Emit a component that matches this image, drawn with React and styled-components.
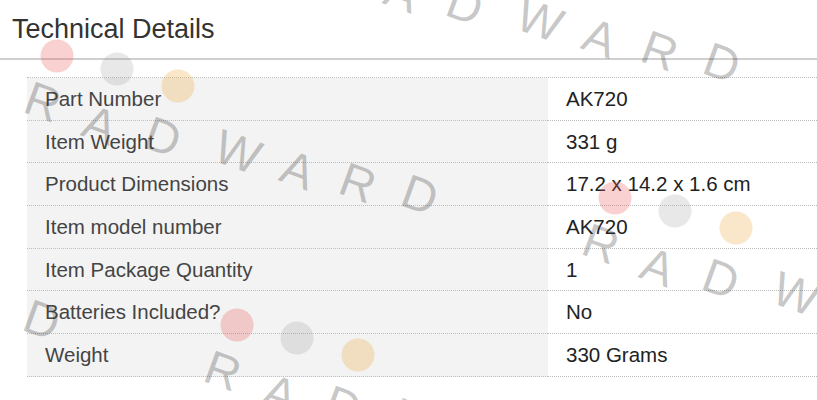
import React from "react";
import styled, { createGlobalStyle } from "styled-components";

const Global = createGlobalStyle`
  html, body { margin: 0; padding: 0; background: #fff; overflow: hidden; }
  body { font-family: "Liberation Sans", Arial, sans-serif; }
`;

const Page = styled.div`
  position: relative;
  width: 817px;
  height: 400px;
  overflow: hidden;
`;

const Header = styled.div`
  height: 58px;
  border-bottom: 2px solid #cfcfcf;
  padding-left: 12px;
  display: flex;
  align-items: flex-start;
`;

const Title = styled.h2`
  margin: 0;
  padding-top: 13px;
  font-size: 27px;
  font-weight: 400;
  color: #333;
  line-height: 32px;
`;

const Table = styled.div`
  margin: 17px 0 0 27px;
  width: 820px;
  display: grid;
  grid-template-columns: 521px 1fr;
  border-top: 1px dotted #bdbdbd;
`;

const Cell = styled.div`
  height: 41.7px;
  box-sizing: content-box;
  border-bottom: 1px dotted #bdbdbd;
  display: flex;
  align-items: center;
  font-size: 20.5px;
  padding-left: 18px;
  background: ${(p) => (p.$label ? "#f3f3f3" : "#fff")};
  color: ${(p) => (p.$label ? "#444" : "#222")};
`;

const Overlay = styled.svg`
  position: absolute;
  left: 0;
  top: 0;
  pointer-events: none;
`;

const rows = [
  ["Part Number", "AK720"],
  ["Item Weight", "331 g"],
  ["Product Dimensions", "17.2 x 14.2 x 1.6 cm"],
  ["Item model number", "AK720"],
  ["Item Package Quantity", "1"],
  ["Batteries Included?", "No"],
  ["Weight", "330 Grams"],
];

const letters = [
  ["R", 43, 102],
  ["A", 100, 125],
  ["D", 163, 137],
  ["W", 238, 152],
  ["A", 298, 170],
  ["R", 358, 183],
  ["D", 420, 195],
];

const dots = [
  [57, 56, "rgba(235,90,90,0.28)"],
  [117, 69, "rgba(150,150,150,0.22)"],
  [178, 86, "rgba(240,175,80,0.3)"],
];

const instances = [
  [0, 0],
  [302, -132],
  [558, 142],
  [180, 269],
  [-378, 125],
];

function Mark({ dx, dy }) {
  return (
    <g transform={`translate(${dx} ${dy})`}>
      {dots.map(([x, y, c], i) => (
        <circle key={i} cx={x} cy={y} r="16.5" fill={c} />
      ))}
      {letters.map(([l, x, y], i) => (
        <text
          key={i}
          x={x}
          y={y}
          textAnchor="middle"
          dominantBaseline="central"
          transform={`rotate(20 ${x} ${y})`}
          fontFamily="'Liberation Sans', Arial, sans-serif"
          fontSize="48"
          fill="rgba(60,60,60,0.28)"
        >
          {l}
        </text>
      ))}
    </g>
  );
}

export default function App() {
  return (
    <Page>
      <Global />
      <Header>
        <Title>Technical Details</Title>
      </Header>
      <Table>
        {rows.map(([k, v]) => (
          <React.Fragment key={k}>
            <Cell $label>{k}</Cell>
            <Cell>{v}</Cell>
          </React.Fragment>
        ))}
      </Table>
      <Overlay width="817" height="400" viewBox="0 0 817 400">
        {instances.map(([dx, dy], i) => (
          <Mark key={i} dx={dx} dy={dy} />
        ))}
      </Overlay>
    </Page>
  );
}
